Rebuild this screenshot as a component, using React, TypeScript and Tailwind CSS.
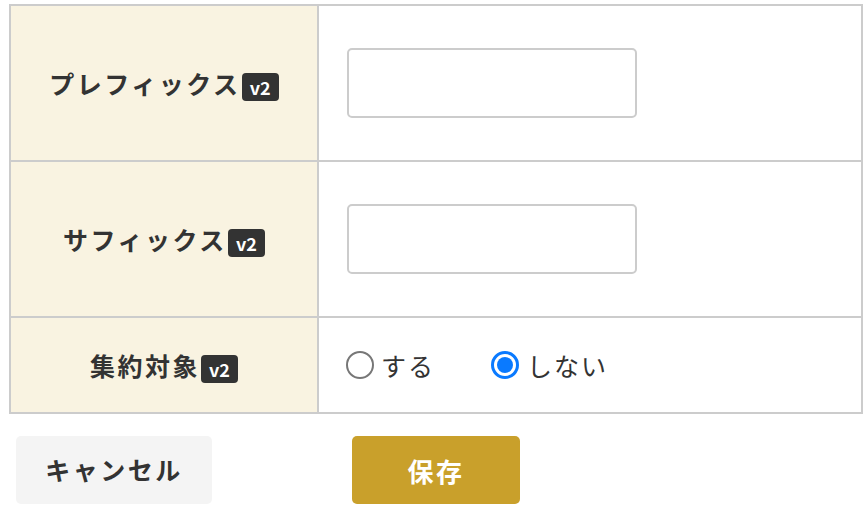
import React from 'react';

const font = { fontFamily: '"Noto Sans CJK JP", "Noto Sans", sans-serif' };

const Badge = () => (
  <span className="inline-flex items-center justify-center w-[37px] h-[28px] rounded-[4px] bg-[#333] text-white text-[18px] font-bold tracking-normal leading-none ml-[1px] translate-y-[4px]">
    v2
  </span>
);

const Label: React.FC<{ text: string; last?: boolean }> = ({ text, last }) => (
  <div className={`bg-[#f9f3e1] border-r-2 border-[#ccc] flex items-center justify-center ${last ? '' : 'border-b-2'}`}>
    <span className="text-[25px] font-bold text-[#333] tracking-[0.1em] leading-none flex items-center">
      {text}
      <Badge />
    </span>
  </div>
);

const TextCell: React.FC = () => (
  <div className="border-b-2 border-[#ccc] flex items-center pl-[28px]">
    <input type="text" className="w-[290px] h-[70px] border-2 border-[#ccc] rounded-[5px] bg-white outline-none" />
  </div>
);

const Radio: React.FC<{ checked?: boolean }> = ({ checked }) =>
  checked ? (
    <span className="w-[28px] h-[28px] rounded-full border-[3px] border-[#0a7aff] flex items-center justify-center">
      <span className="w-[16px] h-[16px] rounded-full bg-[#0a7aff]" />
    </span>
  ) : (
    <span className="w-[28px] h-[28px] rounded-full border-2 border-[#777] bg-white" />
  );

export default function App() {
  const [target, setTarget] = React.useState<'yes' | 'no'>('no');
  return (
    <div className="w-[868px] h-[514px] bg-white pt-[4px]" style={font}>
      <div className="ml-[9px] w-[854px] border-2 border-[#ccc] grid grid-cols-[308px_1fr] grid-rows-[156px_156px_94px]">
        <Label text="プレフィックス" />
        <TextCell />
        <Label text="サフィックス" />
        <TextCell />
        <Label text="集約対象" last />
        <div className="flex items-center pl-[27px] text-[25px] text-[#333] tracking-[0.08em]">
          <label className="flex items-center gap-[7px] cursor-pointer" onClick={() => setTarget('yes')}>
            <Radio checked={target === 'yes'} />
            <span className="leading-none">する</span>
          </label>
          <label className="flex items-center gap-[8px] cursor-pointer ml-[56px]" onClick={() => setTarget('no')}>
            <Radio checked={target === 'no'} />
            <span className="leading-none">しない</span>
          </label>
        </div>
      </div>
      <div className="flex mt-[22px] pl-[16px]">
        <button className="w-[196px] h-[68px] rounded-[5px] bg-[#f4f4f4] text-[#333] text-[25px] font-bold tracking-[0.1em]">
          キャンセル
        </button>
        <button className="ml-[140px] w-[168px] h-[68px] rounded-[5px] bg-[#c9a02b] text-white text-[26px] font-bold tracking-[0.1em]">
          保存
        </button>
      </div>
    </div>
  );
}
